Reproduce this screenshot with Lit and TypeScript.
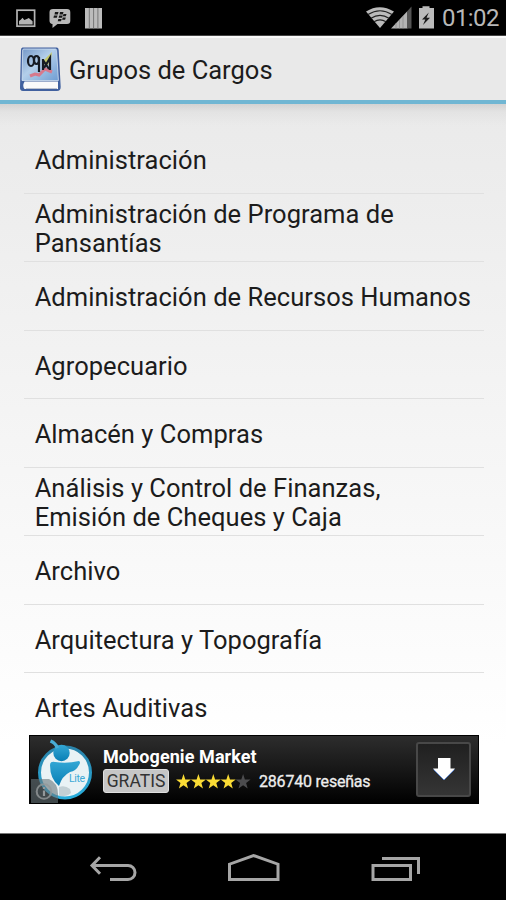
import { LitElement, html, css, svg } from "lit";
import { customElement } from "lit/decorators.js";

const GROUPS = [
  ["Administración"],
  ["Administración de Programa de", "Pansantías"],
  ["Administración de Recursos Humanos"],
  ["Agropecuario"],
  ["Almacén y Compras"],
  ["Análisis y Control de Finanzas,", "Emisión de Cheques y Caja"],
  ["Archivo"],
  ["Arquitectura y Topografía"],
  ["Artes Auditivas"],
];

@customElement("status-bar")
class StatusBar extends LitElement {
  static styles = css`
    :host { display: flex; align-items: center; height: 36px; background: #000; flex: none; padding: 0 8px 0 16px; box-sizing: border-box; border-bottom: 1px solid #444; }
    svg { display: block; flex: none; }
    .bbm { margin-left: 13px; }
    .bars { margin-left: 14px; }
    .gap { flex: 1; }
    .battery { margin-left: 6px; }
    .time { font: 24px/35px Roboto, sans-serif; color: #b8b8b8; margin-left: 7px; height: 35px; width: 56px; white-space: nowrap; letter-spacing: -0.6px; padding-top: 1px; box-sizing: border-box; }
  `;
  render() {
    return html`
      <svg width="20" height="36" viewBox="0 0 20 36"><rect x="1" y="10.2" width="17.6" height="16" fill="none" stroke="#b4b4b4" stroke-width="1.7"/><path d="M3 24.5v-3.5l2-1.5 1.5-1.8 1.8 2.4 2.5-1 2-1.2 3.8 3.3v3.3z" fill="#b4b4b4"/></svg>
      <svg class="bbm" width="22" height="36" viewBox="0 0 22 36"><path d="M4 9h14q3.300 0 3.300 3.300v8.400q0 3.300-3.300 3.300H8.500L3.500 28V24Q.5 23.500.5 20.700v-8.400Q.5 9 4 9z" fill="#b8b8b8"/><g fill="#171717"><path d="M6 12h3.500l-.7 2.400H5.500zM11 12h3.500l-.7 2.400h-3.300zM5 15.500h3.500l-.7 2.300H4.400zM10.200 15.500h3.500l-.7 2.300H9.600zM14.500 14h3l-.7 2.200h-3zM9.300 19h3.400l-.7 2.300H8.700zM13.800 17.500h3l-.7 2.300h-3z"/></g></svg>
      <svg class="bars" width="18" height="36" viewBox="0 0 18 36"><path d="M0 8h17v20.500H0z" fill="#bcbcbc"/><path d="M4.300 8v20.500M8.600 8v20.500M12.900 8v20.500" stroke="#777" stroke-width="1"/></svg>
      <span class="gap"></span>
      <svg width="46" height="36" viewBox="366 0 46 36">
        <path d="M366 11.500Q379.500 3 394 11.500L380 28z" fill="#bbb"/>
        <g fill="none" stroke="#222" stroke-width="1.200"><path d="M368 14.500Q380 7 392 14.500M371 18.200Q380 12.500 389 18.200M374 21.700Q380 18 386 21.700"/></g>
        <path d="M391 28.500 407.500 11v17.500z" fill="#b4b4b4"/><path d="M407 11.500 411.500 6.500v22H407z" fill="#555"/>
        <path d="M396 23v5.500M399.500 20v8.500M403 16v12.500" stroke="#888" stroke-width=".7"/>
      </svg>
      <svg class="battery" width="17" height="36" viewBox="0 0 17 36"><path d="M4.500 6.300h7V8H16v20.500H1V8h3.500z" fill="#bbb"/><path d="m10.800 12.500-6.800 7h3.300l-2.300 5.500 7-7.300H8.500z" fill="#1b1b1b"/></svg>
      <span class="time">01:02</span>`;
  }
}

@customElement("title-bar")
class TitleBar extends LitElement {
  static styles = css`
    :host { display: flex; align-items: center; flex: none; height: 68px; box-sizing: border-box; background: #e9e9e9; border-top: 2px solid #fafafa; border-bottom: 4px solid #70b6d3; padding-left: 18px; }
    svg { display: block; flex: none; }
    .title { margin-left: 7px; padding-top: 2px; font: 25.500px/30px Roboto, sans-serif; color: #1c1c1c; white-space: nowrap; }
  `;
  render() {
    return html`
      <svg width="44" height="48" viewBox="18 45 44 48">
        <defs><linearGradient id="cover" x1="0" y1="0" x2="1" y2="1"><stop offset="0" stop-color="#7498c8"/><stop offset=".45" stop-color="#b3cfea"/><stop offset="1" stop-color="#6f9dd3"/></linearGradient></defs>
        <path d="M22.500 47.500H57Q58.500 47.500 58.700 50L60.700 87Q60.700 91 57 91H23Q19.700 91 20 87L21 50Q21 47.500 22.500 47.500z" fill="#41619f"/>
        <path d="M24 49h31.500q1 0 1.100 1.500L58.400 80.500H22L22.700 50q0-1 1.300-1z" fill="url(#cover)" stroke="#d4e3f2" stroke-width=".8"/>
        <path d="M24.500 81.500H58V89H24.500q-2.500-3 0-7.500z" fill="#fafafa"/><path d="M26 88.500h31" stroke="#bcc2ce" stroke-width="1"/>
        <path d="m42 62 10-10-1 7-4 8z" fill="#c5ca6e"/><path d="m30 76 5-2 4 1 6-6 7 3" fill="none" stroke="#d7798c" stroke-width="3"/>
        <g fill="none" stroke="#161b23" stroke-width="2.200"><ellipse cx="31" cy="61" rx="3" ry="5"/><ellipse cx="36.500" cy="60" rx="2.500" ry="4"/><path d="M39 57v15M43 59v11M43 60l6 9M44 68l6-10v12"/></g>
      </svg>
      <span class="title">Grupos de Cargos</span>`;
  }
}

@customElement("group-list")
class GroupList extends LitElement {
  static styles = css`
    :host { display: block; overflow: hidden; padding: 21px 22px 0 24px; box-sizing: border-box; }
    .row { height: 68.500px; box-sizing: border-box; border-bottom: 1px solid #e0e0e0; padding: 4px 0 0 10.700px; display: flex; flex-direction: column; justify-content: center; font: 25.500px/29px Roboto, sans-serif; letter-spacing: 0.04px; color: #1c1c1c; white-space: nowrap; }
    .row:last-child { border-color: transparent; }
  `;
  render() {
    return GROUPS.map((lines) => html`<div class="row">${lines.map((l) => html`<span>${l}</span>`)}</div>`);
  }
}

const star = (x: number, on: boolean) =>
  svg`<path transform="translate(${x} 0)" d="M7.500 0 9.300 5.500h5.700L10.500 9l1.600 5.500L7.500 11.300l-4.600 3.200L4.500 9 0 5.500h5.700z" fill="${on ? "#fbdc35" : "#4c4c4e"}"/>`;

@customElement("ad-banner")
class AdBanner extends LitElement {
  static styles = css`
    :host { display: flex; height: 69px; width: 450px; box-sizing: border-box; border: 1px solid #000; background: linear-gradient(#2d2d2d, #171717 50%, #000); font-family: Roboto, sans-serif; }
    svg { display: block; flex: none; }
    .body { margin-left: 5px; width: 310px; padding-top: 7px; }
    .name { font-weight: 700; font-size: 18px; line-height: 27px; height: 26px; letter-spacing: 0.08px; color: #fff; white-space: nowrap; }
    .meta { display: flex; align-items: center; height: 24px; }
    .free { background: #c6c6c6; border: 1px solid #e0e0e0; border-radius: 3px; width: 66px; height: 24px; box-sizing: border-box; text-align: center; font-size: 17.500px; line-height: 23px; color: #333; }
    .stars { margin-left: 7px; }
    .reviews { margin-left: 8px; font-size: 16px; line-height: 24px; letter-spacing: -0.2px; color: #eee; -webkit-text-stroke: 0.3px #eee; white-space: nowrap; padding-top: 2px; }
    .get { width: 55px; height: 55px; box-sizing: border-box; border: 2px solid #484848; border-radius: 3px; margin: 6px 0 0 3px; background: linear-gradient(#202020, #353535); }
  `;
  render() {
    return html`
      <svg width="68" height="67" viewBox="30 736 68 67">
        <defs><linearGradient id="b" x1="0" y1="0" x2="0" y2="1"><stop offset="0" stop-color="#34a7d5"/><stop offset="1" stop-color="#087fb5"/></linearGradient><linearGradient id="ring" x1="0" y1="0" x2="0" y2="1"><stop offset="0" stop-color="#2a83aa"/><stop offset="1" stop-color="#28addc"/></linearGradient></defs>
        <circle cx="65" cy="772.500" r="25.500" fill="#e9f2f5" stroke="url(#ring)" stroke-width="3"/>
        <circle cx="61.500" cy="753" r="8.200" fill="url(#b)"/><path d="M50.500 741q5 2 7 7" fill="none" stroke="#48acd5" stroke-width="3.500"/>
        <path d="M50 765q0-4 5-3 12 2 24-1 2 1 0 4-3 6-9 7-8 4-11 14-9-7-9-21z" fill="url(#b)"/>
        <path d="M59 787q6-2 11 2l1 4q-5 4-12 3" fill="#c3d0d5"/>
        <text x="69" y="782" font-family="Roboto, sans-serif" font-size="10.500" textLength="16" fill="#3da9d5">Lite</text>
        <path d="M31 779h18q9 4 9 15v9H31z" fill="#68757a" opacity=".6"/><circle cx="44" cy="791.500" r="7.300" fill="none" stroke="#93989a" stroke-width="2" opacity=".8"/><path d="M44 787v2M44 790.500v5.500" stroke="#93989a" stroke-width="2.200"/>
      </svg>
      <div class="body">
        <div class="name">Mobogenie Market</div>
        <div class="meta"><span class="free">GRATIS</span>
          <svg class="stars" width="75" height="15" viewBox="0 0 75 15">${[0, 1, 2, 3, 4].map((i) => star(i * 14.9, i < 4))}</svg>
          <span class="reviews">286740 reseñas</span></div>
      </div>
      <div class="get"><svg width="51" height="51" viewBox="0 0 51 51"><path d="M20 14h12.500v10.500H37L26 36 15 24.500h5z" fill="#fff"/><path d="M15.500 25.500 26 36l10.500-10.500" fill="none" stroke="#5d84c9" stroke-width="1"/></svg></div>`;
  }
}

@customElement("nav-bar")
class NavBar extends LitElement {
  static styles = css`
    :host { display: block; flex: none; height: 67px; background: #000; border-top: 1px solid #777; box-sizing: border-box; }
    svg { display: block; }
  `;
  render() {
    return html`<svg width="506" height="66" viewBox="0 834 506 66" fill="none" stroke="#a6a6a6" stroke-width="3">
      <path d="M100 857.300 92 865.500l8 8.200M92 865.500h36a7 7 0 0 1 0 14h-18"/>
      <path d="M229.500 879.500v-15.300l24-8.700 24.500 8.700v15.300z"/>
      <path d="M373 865.500h37.500v14H373zM382 858.500h36.500v15.500"/>
    </svg>`;
  }
}

@customElement("app-root")
class AppRoot extends LitElement {
  static styles = css`
    :host { display: flex; flex-direction: column; width: 506px; height: 900px; overflow: hidden; background: #fff; }
    .content { flex: 1; min-height: 0; display: flex; flex-direction: column; background: linear-gradient(rgba(0,0,0,.1), rgba(0,0,0,.03) 8px, transparent 22px), linear-gradient(#eaeaea, #fff 88%); }
    .ad { margin-left: 29px; flex: none; }
    group-list { height: 631px; flex: none; }
  `;
  render() {
    return html`<status-bar></status-bar><title-bar></title-bar>
      <div class="content"><group-list></group-list><ad-banner class="ad"></ad-banner></div>
      <nav-bar></nav-bar>`;
  }
}
